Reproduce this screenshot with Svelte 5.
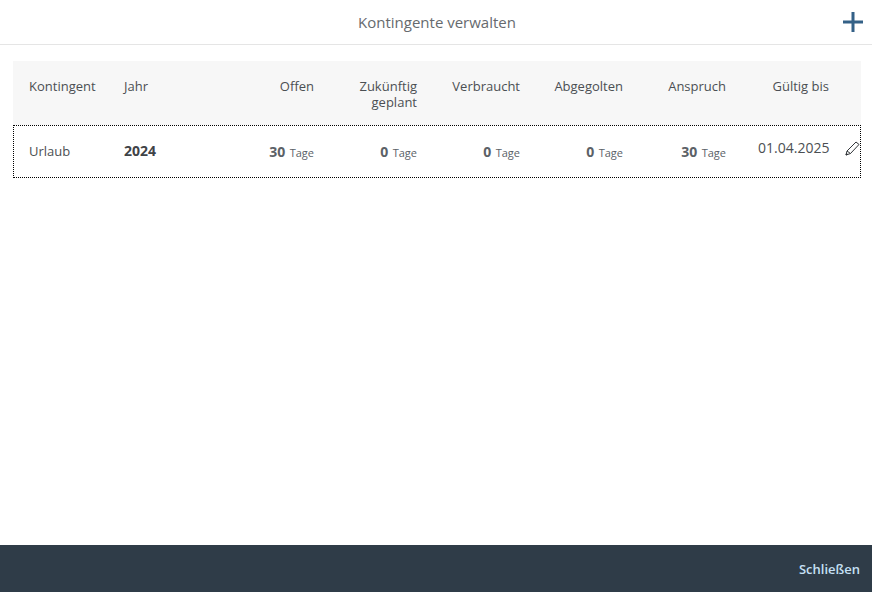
<script>
  const columns = [
    { label: "Kontingent" },
    { label: "Jahr" },
    { label: "Offen", end: true },
    { label: "Zukünftig geplant", end: true },
    { label: "Verbraucht", end: true },
    { label: "Abgegolten", end: true },
    { label: "Anspruch", end: true },
    { label: "Gültig bis", end: true }
  ];

  const amounts = [30, 0, 0, 0, 30];
</script>

<div class="dialog">
  <header class="bar">
    <h1>Kontingente verwalten</h1>
    <button class="add" aria-label="Hinzufügen">
      <svg width="20" height="20" viewBox="0 0 20 20">
        <path d="M0 10h20M10 0v20" stroke="#346187" stroke-width="3" fill="none" />
      </svg>
    </button>
  </header>

  <section class="content">
    <div class="table">
      <div class="row head">
        {#each columns as col}
          <div class="cell" class:end={col.end}><span class="label">{col.label}</span></div>
        {/each}
        <div></div>
      </div>

      <div class="row item">
        <div class="cell">Urlaub</div>
        <div class="cell year">2024</div>
        {#each amounts as n}
          <div class="cell end amount"><strong>{n}</strong> <small>Tage</small></div>
        {/each}
        <div class="cell end date">01.04.2025</div>
        <div class="edit">
          <svg width="15" height="15" viewBox="0 0 15 15" fill="none" stroke="#32363a" stroke-width="1">
            <path d="M1 14l1-4L11 1l3 2.5-8.5 9z" />
            <path d="M2 10l3.500 2.500" />
            <path d="M1 14l1.500-.7-1-.9z" fill="#32363a" />
          </svg>
        </div>
      </div>
    </div>
  </section>

  <footer class="foot">
    <button class="close">Schließen</button>
  </footer>
</div>

<style>
  :global(body) {
    margin: 0;
    background: #fff;
    font-family: "Open Sans", "Noto Sans", sans-serif;
    color: #32363a;
  }

  .dialog {
    display: flex;
    flex-direction: column;
    width: 872px;
    height: 592px;
    overflow: hidden;
  }

  .bar {
    position: relative;
    flex: none;
    display: flex;
    align-items: center;
    justify-content: center;
    height: 44px;
    padding-left: 2px;
    border-bottom: 1px solid #e5e5e5;
  }

  h1 {
    margin: 0;
    font-size: 15px;
    font-weight: 400;
    color: #666a6e;
  }

  .add {
    position: absolute;
    top: 12px;
    right: 9px;
    display: flex;
    padding: 0;
    border: 0;
    background: none;
  }

  .content {
    flex: 1;
    padding: 16px 11px 0 13px;
  }

  .row {
    display: grid;
    grid-template-columns: 95px 119px repeat(6, 103px) 16px;
  }

  .head {
    height: 64px;
    background: #f7f7f7;
    font-size: 13px;
    line-height: 16px;
    color: #4b4f53;
  }

  .head .cell {
    padding-top: 17px;
  }

  .head .label {
    display: block;
  }

  .item {
    box-sizing: border-box;
    height: 53px;
    align-items: center;
    outline: 1px dotted #000;
    outline-offset: -1px;
    font-size: 13px;
    color: #4b4f53;
  }

  .item > .cell:first-child {
    padding-bottom: 2px;
  }

  .cell {
    padding: 0 16px;
    min-width: 0;
  }

  .end {
    text-align: right;
  }

  .year {
    font-size: 14px;
    padding-bottom: 2px;
    font-weight: 700;
    color: #3f4347;
  }

  .amount {
    color: #5b6167;
  }

  .amount strong {
    font-size: 14px;
    font-weight: 700;
  }

  .amount small {
    font-size: 11px;
    margin-left: 1px;
  }

  .date {
    font-size: 14px;
    padding-bottom: 9px;
  }

  .edit {
    display: flex;
    padding-bottom: 6px;
  }

  .foot {
    flex: none;
    display: flex;
    align-items: center;
    justify-content: flex-end;
    height: 47px;
    padding-right: 12px;
    background: #2f3c48;
  }

  .close {
    padding: 0;
    border: 0;
    background: none;
    font: 600 13px "Open Sans", "Noto Sans", sans-serif;
    color: #c6e0f5;
  }
</style>
